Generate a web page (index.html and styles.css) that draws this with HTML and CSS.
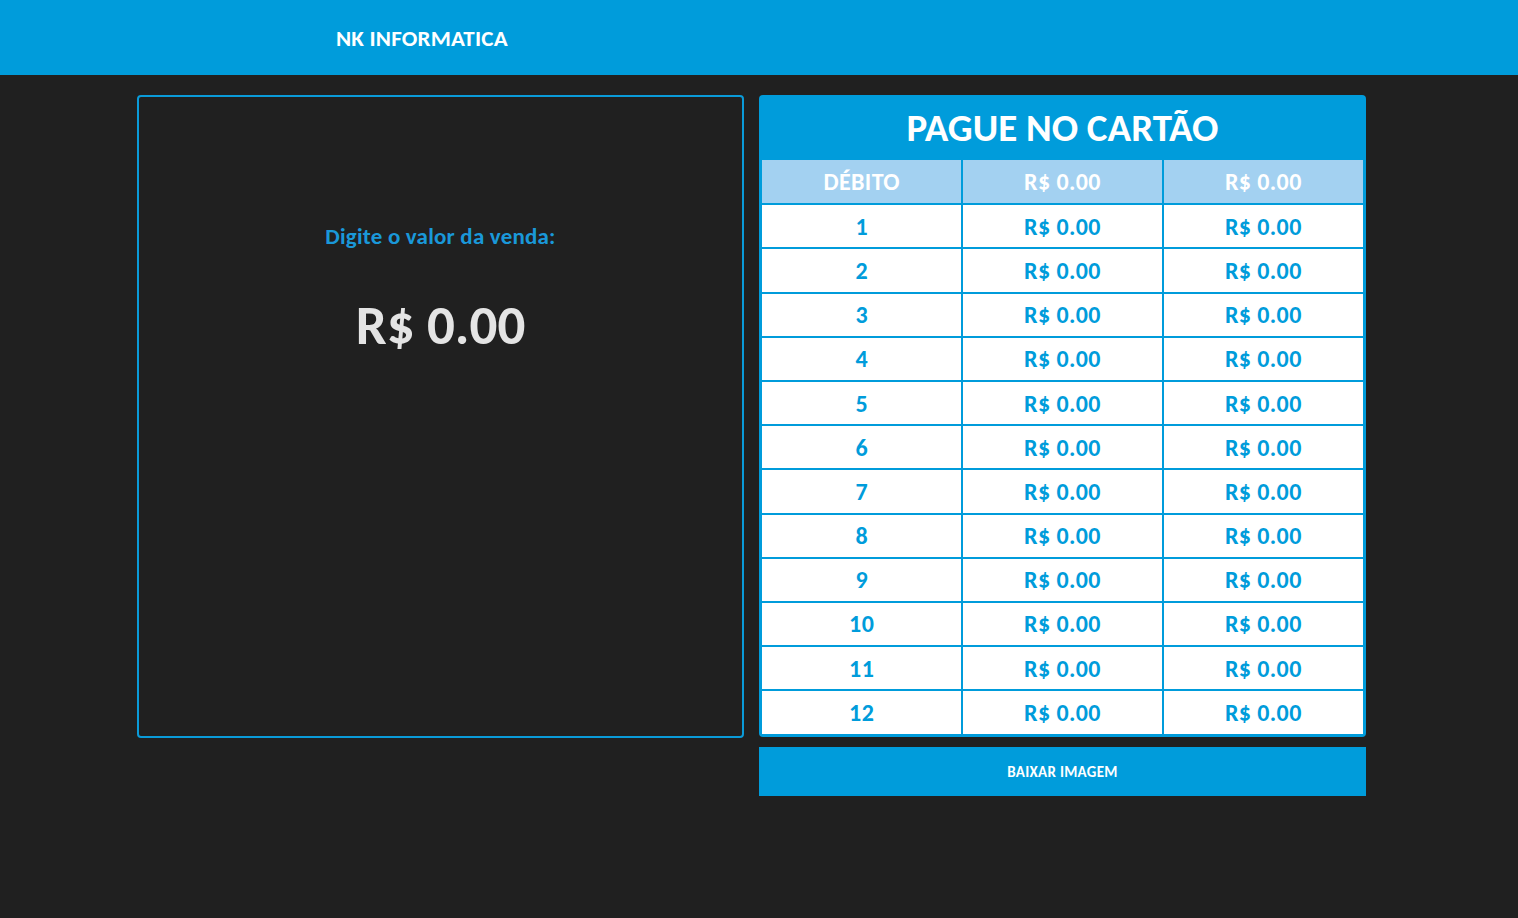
FILE: index.html
```html
<!DOCTYPE html>
<html lang="pt-BR">
<head>
<meta charset="utf-8">
<title>NK INFORMATICA</title>
<link rel="stylesheet" href="styles.css">
</head>
<body>
<header class="topbar">
  <div class="brand">NK INFORMATICA</div>
</header>
<main class="main">
  <section class="input-panel">
    <label class="input-label">Digite o valor da venda:</label>
    <div class="input-value">R$ 0.00</div>
  </section>
  <section class="right-col">
    <div class="card-panel">
      <h1 class="card-title">PAGUE NO CARTÃO</h1>
      <table class="rates">
        <thead>
          <tr><th>DÉBITO</th><th>R$ 0.00</th><th>R$ 0.00</th></tr>
        </thead>
        <tbody>
          <tr><td>1</td><td>R$ 0.00</td><td>R$ 0.00</td></tr>
          <tr><td>2</td><td>R$ 0.00</td><td>R$ 0.00</td></tr>
          <tr><td>3</td><td>R$ 0.00</td><td>R$ 0.00</td></tr>
          <tr><td>4</td><td>R$ 0.00</td><td>R$ 0.00</td></tr>
          <tr><td>5</td><td>R$ 0.00</td><td>R$ 0.00</td></tr>
          <tr><td>6</td><td>R$ 0.00</td><td>R$ 0.00</td></tr>
          <tr><td>7</td><td>R$ 0.00</td><td>R$ 0.00</td></tr>
          <tr><td>8</td><td>R$ 0.00</td><td>R$ 0.00</td></tr>
          <tr><td>9</td><td>R$ 0.00</td><td>R$ 0.00</td></tr>
          <tr><td>10</td><td>R$ 0.00</td><td>R$ 0.00</td></tr>
          <tr><td>11</td><td>R$ 0.00</td><td>R$ 0.00</td></tr>
          <tr><td>12</td><td>R$ 0.00</td><td>R$ 0.00</td></tr>
        </tbody>
      </table>
    </div>
    <button class="download-btn">BAIXAR IMAGEM</button>
  </section>
</main>
</body>
</html>
```

FILE: styles.css
```css
* { box-sizing: border-box; }
html, body {
  margin: 0;
  padding: 0;
  background: #202020;
  height: 100%;
}
body {
  font-family: Carlito, Lato, "Open Sans", sans-serif;
  font-weight: 700;
}
.topbar {
  height: 75px;
  background: #009cdb;
  display: flex;
  align-items: center;
  padding-left: 336px;
}
.brand {
  color: #ffffff;
  font-size: 23px;
  font-weight: 700;
  letter-spacing: 0.2px;
}
.main {
  display: flex;
  gap: 15px;
  padding-left: 137px;
  padding-top: 20px;
}
.input-panel {
  width: 607px;
  height: 643px;
  border: 2px solid #0a9bd9;
  border-radius: 4px;
  display: flex;
  flex-direction: column;
  align-items: center;
  padding-top: 125px;
}
.input-label {
  color: #1a98d9;
  font-size: 23px;
  letter-spacing: 0.2px;
}
.input-value {
  color: #e4e4e4;
  font-size: 55px;
  margin-top: 46px;
  line-height: 1.1;
}
.right-col {
  width: 607px;
  display: flex;
  flex-direction: column;
  gap: 10px;
}
.card-panel {
  background: #009cdb;
  border-radius: 4px;
  padding: 0 3px 3px 3px;
}
.card-title {
  margin: 0;
  height: 65px;
  color: #ffffff;
  font-size: 39px;
  text-align: center;
  line-height: 66px;
}
.rates {
  width: 100%;
  border-collapse: collapse;
  table-layout: fixed;
}
.rates th, .rates td {
  height: 44.2px;
  border: 2px solid #009cdb;
  text-align: center;
  font-size: 24px;
  letter-spacing: 0.4px;
  padding: 0;
}
.rates tr:first-child th { border-top: 0; }
.rates th:first-child, .rates td:first-child { border-left: 0; }
.rates th:last-child, .rates td:last-child { border-right: 0; }
.rates tbody tr:last-child td { border-bottom: 0; }
.rates th {
  background: #a3d1f1;
  color: #ffffff;
}
.rates td {
  background: #ffffff;
  color: #009cdb;
}
.download-btn {
  height: 49px;
  border: 0;
  background: #009cdb;
  color: #ffffff;
  font-family: inherit;
  font-weight: 700;
  font-size: 15px;
  letter-spacing: 0.3px;
  padding: 0;
}
```
